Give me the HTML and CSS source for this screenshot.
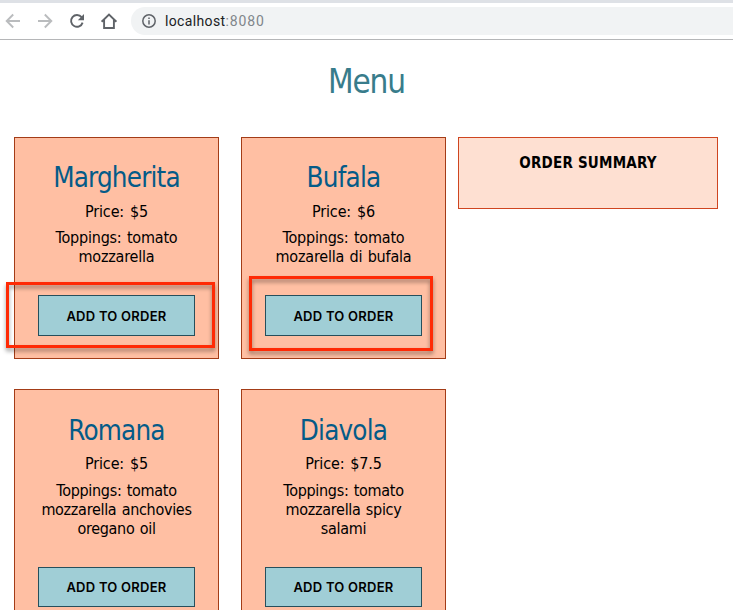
FILE: index.html
```html
<!DOCTYPE html>
<html lang="en">
<head>
<meta charset="utf-8">
<title>Menu</title>
<link rel="stylesheet" href="styles.css">
</head>
<body>
<header class="browser">
  <svg class="nav" width="116" height="28" viewBox="0 0 116 28" fill="none" stroke-width="1.9">
    <g stroke="#babcbe">
      <path d="M20 14H7M13.200 7.500L6.700 14l6.500 6.500"/>
      <path d="M38 14h13M44.800 7.500l6.500 6.500-6.500 6.500"/>
    </g>
    <path d="M81.600 10.200A5.900 5.900 0 1 0 82.600 15.600" stroke="#5f6368"/>
    <path d="M84 7v6.200h-6.200z" fill="#5f6368"/>
    <path d="M101.600 14.700L109 7.500l7.400 7.200M104.100 13v8h9.800V13" stroke="#5f6368"/>
  </svg>
  <div class="address">
    <svg width="14" height="14" viewBox="0 0 14 14" fill="none" stroke="#5f6368" stroke-width="1.5"><circle cx="7" cy="7" r="6.200"/><path d="M7 6.200v4.200M7 3.500v1.500"/></svg>
    <span class="url">localhost<span class="port">:8080</span></span>
  </div>
</header>
<main>
  <h1>Menu</h1>
  <div class="layout">
    <section class="pizzas">
      <article class="card">
        <h2>Margherita</h2>
        <p class="price">Price: $5</p>
        <p class="toppings">Toppings: tomato<br>mozzarella</p>
        <button>ADD TO ORDER</button>
        <i class="mark mark-first"></i>
      </article>
      <article class="card">
        <h2>Bufala</h2>
        <p class="price">Price: $6</p>
        <p class="toppings">Toppings: tomato<br>mozarella di bufala</p>
        <button>ADD TO ORDER</button>
        <i class="mark mark-second"></i>
      </article>
      <article class="card tall">
        <h2>Romana</h2>
        <p class="price">Price: $5</p>
        <p class="toppings">Toppings: tomato<br>mozzarella anchovies<br>oregano oil</p>
        <button>ADD TO ORDER</button>
      </article>
      <article class="card tall">
        <h2>Diavola</h2>
        <p class="price">Price: $7.5</p>
        <p class="toppings">Toppings: tomato<br>mozzarella spicy<br>salami</p>
        <button>ADD TO ORDER</button>
      </article>
    </section>
    <aside class="summary">ORDER SUMMARY</aside>
  </div>
</main>
</body>
</html>
```
FILE: styles.css
```css
* { box-sizing: border-box; }
html, body { height: 610px; overflow: hidden; }
body {
  margin: 0;
  background: #fff;
  color: #000;
  font: 16px/19px "DejaVu Sans Condensed", "DejaVu Sans", sans-serif;
  font-stretch: condensed;
}
h1, h2, p { margin: 0; font-weight: 400; }
.browser {
  display: flex;
  align-items: center;
  height: 40px;
  border-top: 3px solid #dee1e6;
  border-bottom: 1px solid #b5b6b8;
}
.nav { flex: none; overflow: visible; margin-right: 15px; }
.address {
  display: flex;
  flex: 1;
  align-items: center;
  gap: 9px;
  height: 28px;
  padding-left: 11px;
  border-radius: 14px 0 0 14px;
  background: #f1f3f4;
}
.url { font: 14px/20px Roboto, sans-serif; letter-spacing: .35px; color: #202124; }
.port { letter-spacing: .9px; color: #80868b; }
h1 {
  height: 97px;
  padding-top: 22px;
  text-align: center;
  font-size: 33px;
  line-height: 40px;
  letter-spacing: -1.1px;
  color: #387c8b;
}
.layout { display: flex; align-items: flex-start; gap: 12px; padding-left: 14px; }
.pizzas { display: grid; grid-template-columns: 205px 205px; gap: 30px 22px; }
.card {
  position: relative;
  display: flex;
  flex-direction: column;
  align-items: center;
  height: 222px;
  padding-top: 22px;
  border: 1px solid #a33c17;
  background: #ffbfa3;
  text-align: center;
}
h2 { font-size: 27.5px; line-height: 34px; letter-spacing: -.8px; color: #045b88; }
.price { margin-top: 8px; letter-spacing: -.15px; word-spacing: 1.5px; }
.toppings { margin-top: 7px; letter-spacing: -.2px; word-spacing: 1px; white-space: nowrap; }
button {
  width: 157px;
  height: 41px;
  margin-top: 29px;
  padding: 2px 0 0;
  border: 1px solid #264f5c;
  background: #a0ced6;
  color: #000;
  font: 600 13px/37px Inter, sans-serif;
  font-stretch: normal;
  letter-spacing: .25px;
}
.tall { height: 242px; padding-top: 23px; }
.tall .price { margin-top: 7px; }
.tall .toppings { margin-top: 8px; letter-spacing: -.3px; }
.tall button { height: 40px; padding-top: 0; line-height: 38px; }
.summary {
  width: 260px;
  height: 72px;
  padding-top: 16px;
  border: 1px solid #cf4520;
  background: #fee0d2;
  text-align: center;
  font-weight: 700;
  font-size: 15px;
  letter-spacing: .2px;
}
.mark {
  position: absolute;
  border: 3px solid #ff2a05;
  filter: drop-shadow(0 3px 2px rgba(0, 0, 0, .4));
}
.mark-first { left: -9px; top: 144px; width: 209px; height: 66px; }
.mark-second { left: 7px; top: 138px; width: 184px; height: 75px; }
```
